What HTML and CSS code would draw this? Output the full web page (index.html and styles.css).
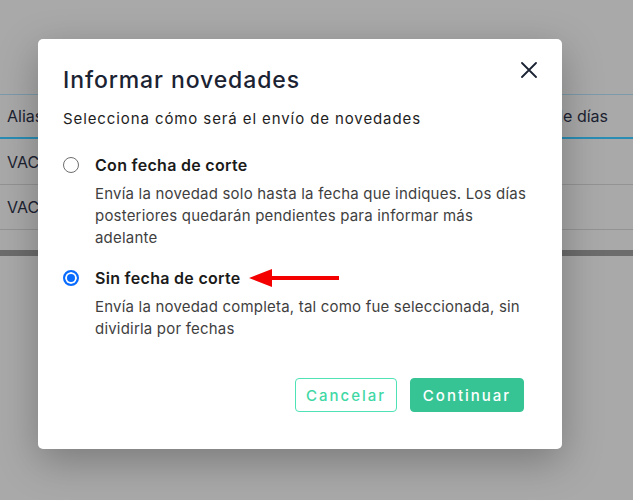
FILE: index.html
```html
<!DOCTYPE html>
<html lang="es">
<head>
    <meta charset="UTF-8">
    <meta name="viewport" content="width=device-width, initial-scale=1.0">
    <title>Informar novedades</title>
    <link rel="stylesheet" href="styles.css">
</head>
<body>

<div class="page">
    <div class="grid">
        <div class="grid-head">
            <span>Alias</span>
            <span>Cantidad de días</span>
        </div>
        <div class="grid-row">VAC</div>
        <div class="grid-row">VAC</div>
    </div>
    <div class="footer-band"></div>
</div>

<div class="modal">
    <div class="modal-header">
        <h1>Informar novedades</h1>
        <button class="close" aria-label="Cerrar">
            <svg width="16" height="16" viewBox="0 0 16 16">
                <path d="M1 1 L15 15 M15 1 L1 15" stroke="#1b2333" stroke-width="1.8" fill="none" stroke-linecap="round"/>
            </svg>
        </button>
    </div>

    <p class="subtitle">Selecciona cómo será el envío de novedades</p>

    <label class="option">
        <input type="radio" name="mode" value="con">
        <span class="option-body">
            <span class="option-title">Con fecha de corte</span>
            <span class="option-text">Envía la novedad solo hasta la fecha que indiques. Los días posteriores quedarán pendientes para informar más adelante</span>
        </span>
    </label>

    <label class="option">
        <input type="radio" name="mode" value="sin" checked>
        <span class="option-body">
            <span class="option-title">Sin fecha de corte
                <svg class="arrow" width="92" height="20" viewBox="0 0 92 20">
                    <path d="M1 10 L24 1 L24 8 L91 8 L91 12 L24 12 L24 19 Z" fill="#f40000"/>
                </svg>
            </span>
            <span class="option-text">Envía la novedad completa, tal como fue seleccionada, sin dividirla por fechas</span>
        </span>
    </label>

    <div class="modal-actions">
        <button class="btn btn-outline">Cancelar</button>
        <button class="btn btn-primary">Continuar</button>
    </div>
</div>

</body>
</html>
```

FILE: styles.css
```css
body {
    margin: 0;
    height: 500px;
    overflow: hidden;
    background-color: #a9a9a9;
    font-family: Inter, "Noto Sans", sans-serif;
}

.page {
    padding-top: 94px;
}

.grid {
    color: #1c2231;
    font-size: 16px;
}

.grid-head {
    display: flex;
    justify-content: space-between;
    align-items: center;
    height: 42px;
    padding: 0 25px 0 7px;
    border-top: 1px solid #7d9aab;
    border-bottom: 2px solid #2a8db4;
}

.grid-row {
    display: flex;
    align-items: center;
    height: 45px;
    padding-left: 7px;
    border-bottom: 1px solid #939393;
}

.grid-row + .grid-row {
    height: 44px;
}

.footer-band {
    margin-top: 20px;
    height: 6px;
    background-color: #6c6c6c;
}

.modal {
    position: absolute;
    left: 38px;
    top: 39px;
    width: 524px;
    height: 410px;
    box-sizing: border-box;
    padding: 27px 25px 0 25px;
    background-color: #fff;
    border-radius: 5px;
    box-shadow: 0 12px 40px rgba(0, 0, 0, 0.28);
}

.modal-header {
    display: flex;
    justify-content: space-between;
    align-items: flex-start;
}

.modal-header h1 {
    margin: 0;
    font-size: 23px;
    line-height: 28px;
    font-weight: 500;
    color: #1b2333;
    letter-spacing: 0.9px;
}

.close {
    border: none;
    background: none;
    padding: 0;
    margin-top: -4px;
    cursor: pointer;
}

.subtitle {
    margin: 14px 0 0 0;
    font-size: 15px;
    line-height: 22px;
    color: #1e1e1e;
    letter-spacing: 0.9px;
}

.option {
    display: flex;
    gap: 16px;
    margin-top: 24px;
    cursor: pointer;
}

.option + .option {
    margin-top: 18px;
}

.option input {
    appearance: none;
    width: 16px;
    height: 16px;
    margin: 3px 0 0 0;
    border: 1.5px solid #6e6e6e;
    border-radius: 50%;
    flex-shrink: 0;
    box-sizing: border-box;
}

.option input:checked {
    border: 2px solid #0a6cff;
    background-color: #0a6cff;
    box-shadow: inset 0 0 0 2px #fff;
}

.option-body {
    display: flex;
    flex-direction: column;
}

.option-title {
    display: flex;
    align-items: center;
    font-size: 16px;
    line-height: 22px;
    font-weight: 600;
    color: #1a1a1a;
    letter-spacing: 0.3px;
}

.arrow {
    margin-left: 7px;
}

.option-text {
    margin-top: 7px;
    font-size: 15px;
    line-height: 22px;
    color: #3f3f3f;
    letter-spacing: 0.2px;
}

.modal-actions {
    display: flex;
    justify-content: flex-end;
    gap: 13px;
    margin-top: 38px;
    padding-right: 13px;
}

.btn {
    height: 34px;
    padding: 0 10px;
    border-radius: 4px;
    font-family: Inter, "Noto Sans", sans-serif;
    font-size: 15px;
    font-weight: 500;
    letter-spacing: 2px;
    cursor: pointer;
}

.btn-outline {
    width: 102px;
    background-color: #fff;
    border: 1px solid #4fe2b6;
    color: #3fd8a5;
}

.btn-primary {
    width: 114px;
    background-color: #37c494;
    border: 1px solid #37c494;
    color: #fff;
}
```
